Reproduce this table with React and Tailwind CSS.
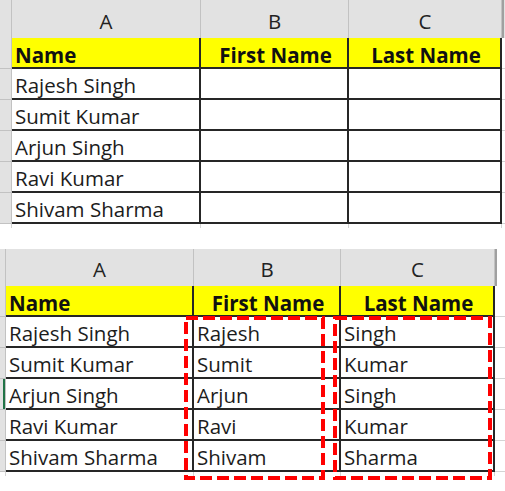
const names = [
  ['Rajesh Singh', 'Rajesh', 'Singh'],
  ['Sumit Kumar', 'Sumit', 'Kumar'],
  ['Arjun Singh', 'Arjun', 'Singh'],
  ['Ravi Kumar', 'Ravi', 'Kumar'],
  ['Shivam Sharma', 'Shivam', 'Sharma'],
];

const cell = 'h-[31px] border-b-2 border-r-2 border-[#262626] pl-[3px] flex items-center text-[20.5px] whitespace-nowrap overflow-hidden';
const body = cell + ' pt-[3px] text-[#1c1c1c]';
const head = cell + ' pt-[5px] bg-[#ffff00] font-bold text-[#111]';

function Sheet({ cols, headerH, filled, selectedRow, restGray }) {
  return (
    <div className="grid" style={{ gridTemplateColumns: cols }}>
      {/* Column letters */}
      <div className="bg-[#e2e2e2] border-r border-[#c2c2c2]" style={{ height: headerH }} />
      {['A', 'B', 'C'].map((l) => (
        <div
          key={l}
          className="bg-[#e2e2e2] border-r border-[#c2c2c2] flex items-center justify-center pt-[4px] text-[20.5px] text-[#222]"
          style={{ height: headerH }}
        >
          {l}
        </div>
      ))}
      <div
        className={restGray ? 'bg-[#e2e2e2] border-l-2 border-[#a0a0a0]' : 'bg-white border-l-2 border-[#a0a0a0]'}
        style={{ height: headerH }}
      />

      {/* Yellow header row */}
      <div className="h-[31px] bg-[#e2e2e2] border-b border-r border-[#c2c2c2]" />
      <div className={head}>Name</div>
      <div className={head + ' justify-center pl-0'}>First Name</div>
      <div className={head + ' justify-center pl-0'}>Last Name</div>
      <div className="h-[31px] border-b border-[#d4d4d4]" />

      {names.map((row, i) => (
        <div key={row[0]} className="contents">
          <div className="h-[31px] bg-[#e2e2e2] border-b border-r border-[#c2c2c2] relative">
            {selectedRow === i && <div className="absolute right-0 top-0 h-full w-[2px] bg-[#217346]" />}
          </div>
          <div className={body}>{row[0]}</div>
          <div className={body}>{filled ? row[1] : ''}</div>
          <div className={body}>{filled ? row[2] : ''}</div>
          <div className="h-[31px] border-b border-[#d4d4d4]" />
        </div>
      ))}

      {/* faint gridlines below */}
      <div className="h-[4px] border-r border-[#d4d4d4]" />
      <div className="h-[4px] border-r border-[#d4d4d4]" />
      <div className="h-[4px] border-r border-[#d4d4d4]" />
      <div className="h-[4px] border-r border-[#d4d4d4]" />
      <div className="h-[4px]" />
    </div>
  );
}

export default function App() {
  return (
    <div className="w-[505px] h-[491px] bg-white overflow-hidden relative" style={{ fontFamily: '"Open Sans", "Noto Sans", sans-serif' }}>
      <div className="flex flex-col">
        <Sheet cols="12px 189px 148px 153px 1fr" headerH={38} filled={false} restGray />
        <div className="h-[21px]" />
        <div className="relative">
          <Sheet cols="6px 188px 147px 154px 1fr" headerH={37} filled selectedRow={2} />
          {/* Red dashed highlight boxes */}
          <svg className="absolute left-0 top-0 pointer-events-none" width="505" height="241">
            <rect x="186" y="69" width="137" height="160" fill="none" stroke="#ff0000" strokeWidth="4" strokeDasharray="12 5" />
            <rect x="335" y="69" width="155" height="160" fill="none" stroke="#ff0000" strokeWidth="4" strokeDasharray="12 5" />
          </svg>
        </div>
      </div>
    </div>
  );
}
